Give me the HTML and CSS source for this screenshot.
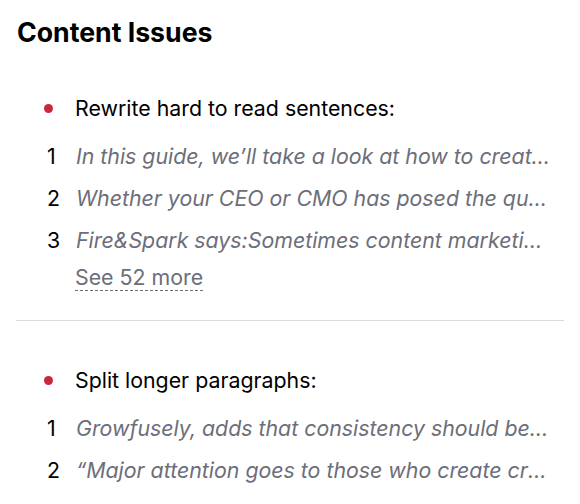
FILE: index.html
```html
<!DOCTYPE html>
<html>
<head>
<meta charset="utf-8">
<link rel="stylesheet" href="styles.css">
</head>
<body>
<div class="panel">
  <h2 class="title">Content Issues</h2>
  <section class="issue first">
    <div class="issue-head"><span class="dot"></span><span>Rewrite hard to read sentences:</span></div>
    <ol class="items">
      <li class="item"><span class="num">1</span><span class="text">In this guide, we’ll take a look at how to create content that converts and ranks</span></li>
      <li class="item"><span class="num">2</span><span class="text">Whether your CEO or CMO has posed the question of how to measure content</span></li>
      <li class="item"><span class="num">3</span><span class="text">Fire&amp;Spark says:Sometimes content marketing can feel like a guessing game</span></li>
    </ol>
    <a class="more">See 52 more</a>
  </section>
  <hr class="divider">
  <section class="issue">
    <div class="issue-head"><span class="dot"></span><span>Split longer paragraphs:</span></div>
    <ol class="items">
      <li class="item"><span class="num">1</span><span class="text">Growfusely, adds that consistency should be a top priority for content teams</span></li>
      <li class="item"><span class="num">2</span><span class="text">“Major attention goes to those who create crisp and valuable content</span></li>
    </ol>
  </section>
</div>
</body>
</html>
```
FILE: styles.css
```css
* { box-sizing: border-box; }
body {
  margin: 0;
  background: #fff;
  font-family: Inter, "Noto Sans", sans-serif;
  color: #000;
}
.panel {
  padding: 14px 16px 0 16px;
}
.title {
  margin: 0;
  padding-left: 1px;
  font-size: 26.67px;
  font-weight: 700;
  line-height: 36px;
  color: #000;
}
.issue {
  padding-left: 28px;
  padding-right: 14px;
}
.issue.first { margin-top: 42px; }
.issue-head {
  display: flex;
  align-items: center;
  gap: 22px;
  font-size: 21.33px;
  line-height: 32px;
  color: #000;
}
.dot {
  width: 9px;
  height: 9px;
  border-radius: 50%;
  background: #c9283b;
  flex: none;
}
.items {
  list-style: none;
  margin: 11px 0 0 0;
  padding: 0;
}
.item {
  display: flex;
  font-size: 21.33px;
  line-height: 42px;
  height: 42px;
}
.num {
  width: 32px;
  flex: none;
  color: #000;
  padding-left: 3px;
}
.text {
  flex: 1;
  min-width: 0;
  color: #6c6e79;
  font-style: italic;
  white-space: nowrap;
  overflow: hidden;
  text-overflow: ellipsis;
}
.more {
  display: inline-block;
  margin-top: 4px;
  margin-left: 31px;
  font-size: 21.33px;
  line-height: 25px;
  color: #6c6e79;
  border-bottom: 1px dashed #6c6e79;
}
.divider {
  border: 0;
  border-top: 1px solid #dadadd;
  margin: 29px 0 43px 0;
}
```
